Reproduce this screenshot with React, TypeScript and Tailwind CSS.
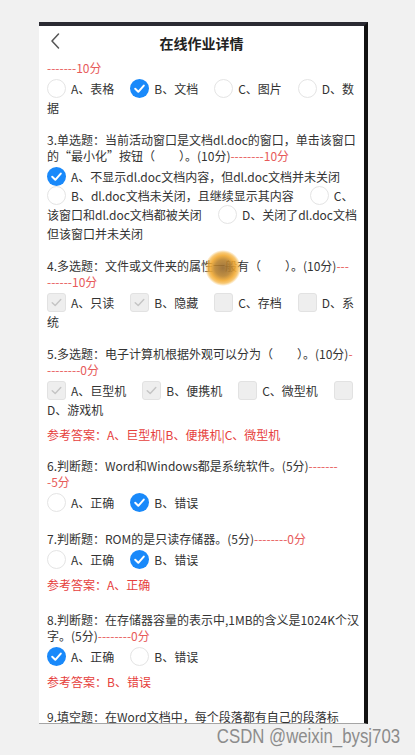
import React from 'react';

type Seg = { t: string; red?: boolean };
type Opt = { label: string; checked?: boolean; brBefore?: boolean };
type Question = {
  text: Seg[];
  kind: 'radio' | 'check';
  options: Opt[];
  answer?: string;
  judge?: boolean;
};

const font = { fontFamily: '"Noto Sans CJK SC", "Noto Sans", sans-serif' };

// "\n" in a string is rendered as a line break
const lines = (s: string) =>
  s.split('\n').map((part, i) => (
    <React.Fragment key={i}>
      {i > 0 && <br />}
      {part}
    </React.Fragment>
  ));

const Radio: React.FC<{ checked?: boolean }> = ({ checked }) =>
  checked ? (
    <span className="inline-block h-[19px] w-[19px] rounded-full bg-[#1989fa] align-top">
      <svg viewBox="0 0 19 19" className="h-[19px] w-[19px]">
        <polyline points="5.2,9.8 8.3,12.8 13.8,6.6" fill="none" stroke="#fff" strokeWidth="2" strokeLinecap="round" strokeLinejoin="round" />
      </svg>
    </span>
  ) : (
    <span className="inline-block h-[19px] w-[19px] rounded-full border border-[#e4e4e4] bg-white align-top" />
  );

const Check: React.FC<{ checked?: boolean }> = ({ checked }) => (
  <span className="inline-block h-[19px] w-[19px] rounded-[3px] border border-[#e2e2e2] bg-[#eeeeee] align-top">
    {checked && (
      <svg viewBox="0 0 17 17" className="h-[17px] w-[17px]">
        <polyline points="4.2,8.8 7.2,11.6 12.8,5.6" fill="none" stroke="#c4c4c4" strokeWidth="1.4" strokeLinecap="round" strokeLinejoin="round" />
      </svg>
    )}
  </span>
);

const questions: Question[] = [
  {
    text: [{ t: '3.单选题：当前活动窗口是文档dl.doc的窗口，单击该窗口\n的“最小化”按钮（　　）。(10分)' }, { t: '--------10分', red: true }],
    kind: 'radio',
    options: [
      { label: 'A、不显示dl.doc文档内容，但dl.doc文档并未关闭', checked: true },
      { label: 'B、dl.doc文档未关闭，且继续显示其内容', brBefore: true },
      { label: 'C、\n该窗口和dl.doc文档都被关闭' },
      { label: 'D、关闭了dl.doc文档\n但该窗口并未关闭' },
    ],
  },
  {
    text: [{ t: '4.多选题：文件或文件夹的属性一般有（　　）。(10分)' }, { t: '---\n------10分', red: true }],
    kind: 'check',
    options: [
      { label: 'A、只读', checked: true },
      { label: 'B、隐藏', checked: true },
      { label: 'C、存档' },
      { label: 'D、系\n统' },
    ],
  },
  {
    text: [{ t: '5.多选题：电子计算机根据外观可以分为（　　）。(10分)' }, { t: '-\n--------0分', red: true }],
    kind: 'check',
    options: [
      { label: 'A、巨型机', checked: true },
      { label: 'B、便携机', checked: true },
      { label: 'C、微型机' },
      { label: '\nD、游戏机' },
    ],
    answer: '参考答案：A、巨型机|B、便携机|C、微型机',
  },
  {
    text: [{ t: '6.判断题：Word和Windows都是系统软件。(5分)' }, { t: '-------\n-5分', red: true }],
    kind: 'radio',
    judge: true,
    options: [{ label: 'A、正确' }, { label: 'B、错误', checked: true }],
  },
  {
    text: [{ t: '7.判断题：ROM的是只读存储器。(5分)' }, { t: '--------0分', red: true }],
    kind: 'radio',
    judge: true,
    options: [{ label: 'A、正确' }, { label: 'B、错误', checked: true }],
    answer: '参考答案：A、正确',
  },
  {
    text: [{ t: '8.判断题：在存储器容量的表示中,1MB的含义是1024K个汉\n字。(5分)' }, { t: '--------0分', red: true }],
    kind: 'radio',
    judge: true,
    options: [{ label: 'A、正确', checked: true }, { label: 'B、错误' }],
    answer: '参考答案：B、错误',
  },
];

const Options: React.FC<{ kind: 'radio' | 'check'; options: Opt[] }> = ({ kind, options }) => (
  <div className="mt-[3px] text-[12px] leading-[19px] text-[#333]">
    {options.map((o, i) => (
      <React.Fragment key={i}>
        {o.brBefore && <br />}
        {kind === 'radio' ? <Radio checked={o.checked} /> : <Check checked={o.checked} />}
        <span className="ml-[5px] mr-[16px]">{lines(o.label)}</span>
      </React.Fragment>
    ))}
  </div>
);

const QuestionBlock: React.FC<{ q: Question }> = ({ q }) => (
  <div className={q.judge ? 'mb-[19px]' : 'mb-[15px]'}>
    <div className="text-[12px] leading-[16px] text-[#333]">
      {q.text.map((s, i) => (
        <span key={i} className={s.red ? 'text-[#e75a5a]' : ''}>
          {lines(s.t)}
        </span>
      ))}
    </div>
    <Options kind={q.kind} options={q.options} />
    {q.answer && <div className="mt-2 text-[12px] leading-[16px] text-[#e6403c]">{q.answer}</div>}
  </div>
);

export default function App() {
  return (
    <div className="relative h-[755px] w-[415px] overflow-hidden bg-[#f1f1f1]" style={font}>
      <div className="ml-[39px] pt-[22px]">
        <div className="h-[702px] w-[329px] overflow-hidden border-t-4 border-r-4 border-b border-t-[#2b2b33] border-r-[#111111] border-b-[#a5a5a5] bg-white">
          <div className="relative flex h-[34px] items-center justify-center">
            <svg viewBox="0 0 10 16" className="absolute left-[11px] top-[7px] h-[16px] w-[10px]">
              <path d="M8.5 1 L2 8 L8.5 15" fill="none" stroke="#555" strokeWidth="1.5" strokeLinecap="round" strokeLinejoin="round" />
            </svg>
            <span className="text-[14px] font-bold text-[#222]">在线作业详情</span>
          </div>
          <div className="pl-2 pr-[5px]">
            <div className="mb-[15px]">
              <div className="text-[12px] leading-[16px] text-[#e75a5a]">-------10分</div>
              <Options
                kind="radio"
                options={[
                  { label: 'A、表格' },
                  { label: 'B、文档', checked: true },
                  { label: 'C、图片' },
                  { label: 'D、数\n据' },
                ]}
              />
            </div>
            {questions.map((q, i) => (
              <QuestionBlock key={i} q={q} />
            ))}
            <div className="text-[12px] leading-[16px] text-[#333]">9.填空题：在Word文档中，每个段落都有自己的段落标</div>
          </div>
        </div>
      </div>
      <div className="absolute left-[205px] top-[250px] h-[36px] w-[36px] rounded-full bg-[radial-gradient(circle_closest-side,rgba(150,105,45,0.92)_0%,rgba(185,130,45,0.9)_45%,rgba(242,170,50,0.9)_70%,rgba(245,178,60,0.7)_85%,rgba(245,180,60,0)_100%)]" />
      <div className="flex justify-end pr-[15px]">
        <span
          className="inline-block origin-right scale-x-[0.8] text-[21px] leading-[24px] text-[#8c8c8c]"
          style={{ fontFamily: '"Liberation Sans", Arial, sans-serif' }}
        >
          CSDN @weixin_bysj703
        </span>
      </div>
    </div>
  );
}
